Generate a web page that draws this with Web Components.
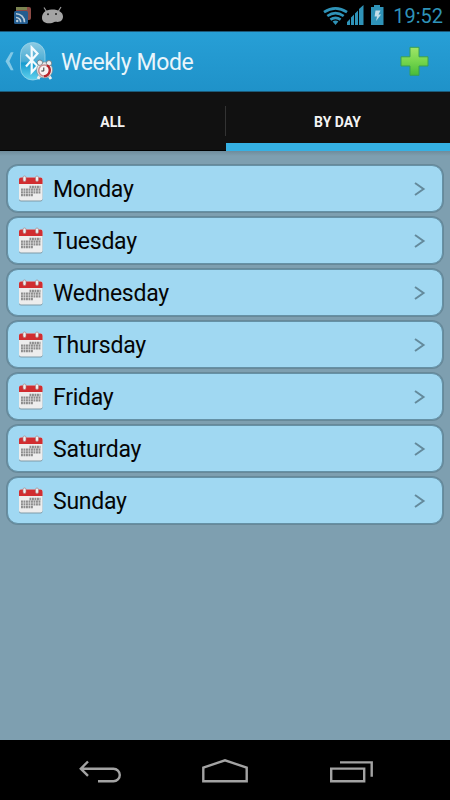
<!DOCTYPE html>
<html lang="en">
<head>
<meta charset="utf-8">
<title>Weekly Mode</title>
<style>
  body {
    margin: 0;
    font-family: Roboto, "Liberation Sans", sans-serif;
  }
</style>
</head>
<body>
<weekly-screen>
  <status-bar slot="top" time="19:52"></status-bar>
  <action-bar slot="top">Weekly Mode</action-bar>
  <tab-strip slot="top">
    <tab-item>ALL</tab-item>
    <tab-item selected>BY DAY</tab-item>
  </tab-strip>
  <day-row>Monday</day-row>
  <day-row>Tuesday</day-row>
  <day-row>Wednesday</day-row>
  <day-row>Thursday</day-row>
  <day-row>Friday</day-row>
  <day-row>Saturday</day-row>
  <day-row>Sunday</day-row>
  <nav-bar slot="bottom"></nav-bar>
</weekly-screen>

<script>
class WeeklyScreen extends HTMLElement {
    constructor() {
        super();
        this.attachShadow({ mode: 'open' });
        this.shadowRoot.innerHTML = `
      <style>
        :host {
          display: flex;
          flex-direction: column;
          width: 450px;
          height: 800px;
          overflow: hidden;
          background: #7e9fb0;
        }
        main {
          flex: 1;
          display: flex;
          flex-direction: column;
          gap: 5px;
          padding: 14px 7px 0 7px;
          background: linear-gradient(#6f8c9b, #7e9fb0 5px);
        }
      </style>
      <slot name="top"></slot>
      <main><slot></slot></main>
      <slot name="bottom"></slot>
    `;
    }
}

class StatusBar extends HTMLElement {
    constructor() {
        super();
        this.attachShadow({ mode: 'open' });
    }

    connectedCallback() {
        this.shadowRoot.innerHTML = `
      <style>
        :host {
          display: flex;
          align-items: center;
          justify-content: space-between;
          box-sizing: border-box;
          height: 31px;
          padding: 0 7px 0 13px;
          background: #000;
          color: #2f93b8;
        }
        div { display: flex; align-items: center; }
        svg { display: block; }
        span { font-size: 20px; line-height: 31px; margin-left: 8px; padding-top: 1px; }
      </style>
      <div>
        <svg width="52" height="31" viewBox="13 0 52 31">
          <path d="M16 7h13a2 2 0 0 1 2 2v9a2 2 0 0 1-2 2H16z" fill="#8c4b46"/>
          <path d="M16 7h11v3H16z" fill="#7c8452"/>
          <rect x="14" y="11" width="14" height="13" rx="1.5" fill="#245d90"/>
          <g fill="none" stroke="#b9cbd8" stroke-width="1.6">
            <path d="M16 17.5a4.5 4.5 0 0 1 4.7 4.7M16 13.7a8.4 8.4 0 0 1 8.5 8.5"/>
          </g>
          <circle cx="17.2" cy="21" r="1.2" fill="#b9cbd8"/>
          <path d="M44 7.5l2.5 4M61 7l-2.5 4" stroke="#9c9c9c" stroke-width="1.2"/>
          <path d="M42 18c0-5.500 4-8.300 9.500-8.500 6.500-.2 11.500 2.500 11.500 7 0 4-3 6-7 5.300-1.500 0-2 .5-4 1.200-5 1.200-10-.5-10-5z" fill="#a4a4a4"/>
          <circle cx="48" cy="14.300" r="1" fill="#222"/>
          <circle cx="56" cy="14" r="1" fill="#222"/>
        </svg>
      </div>
      <div>
        <svg width="62" height="31" viewBox="323 0 62 31">
          <g fill="none" stroke="#2f93b8" stroke-width="2.700">
            <path d="M324 12.200q11.500-7.800 23 0"/>
            <path d="M327.300 16q8.200-5.600 16.400 0"/>
            <path d="M330.400 19.600q5.100-3.600 10.200 0"/>
          </g>
          <path d="M332.600 21.400q2.900-1.800 5.800 0l-2.900 3.700z" fill="#2f93b8"/>
          <g fill="#2f93b8">
            <path d="M347 25v-3l3-3v6zM351 25v-7.500l3-3V25zM355 25V13.500l3-3V25zM359 25V9l4.500-4v20z"/>
            <path d="M371 7h3V5h6v2h3.500v18H371z"/>
          </g>
          <path d="M375.500 10.500h5l-2 4h2.600l-5 6.500.9-4.500h-2.400z" fill="#c3dfea"/>
        </svg>
        <span>${this.getAttribute('time')}</span>
      </div>
    `;
    }
}

class ActionBar extends HTMLElement {
    constructor() {
        super();
        this.attachShadow({ mode: 'open' });
        this.shadowRoot.innerHTML = `
      <style>
        :host {
          display: flex;
          align-items: center;
          box-sizing: border-box;
          height: 61px;
          padding: 0 19px 0 3px;
          border-top: 1px solid #1d5676;
          border-bottom: 1px solid #1c5b7a;
          background: linear-gradient(#279fd6, #1f92c9);
          color: #e9f5fb;
        }
        svg { display: block; flex: none; }
        h1 {
          flex: 1;
          margin: 0 0 0 6px;
          padding-top: 2px;
          font-size: 23px;
          font-weight: 400;
          line-height: 30px;
          letter-spacing: -0.4px;
        }
      </style>
      <svg width="52" height="48" viewBox="3 38 52 48">
        <defs>
          <linearGradient id="pill" x1="0" y1="0" x2="0" y2="1">
            <stop offset="0" stop-color="#8ccbe3"/>
            <stop offset=".5" stop-color="#4bacd4"/>
            <stop offset=".55" stop-color="#169bcf"/>
            <stop offset="1" stop-color="#62d2ee"/>
          </linearGradient>
        </defs>
        <path d="M10.800 52.300h2.800l-4.200 9 4.200 9h-2.800L5.500 61.300z" fill="#83c9e6"/>
        <rect x="20.500" y="42.500" width="24.500" height="37.500" rx="12" fill="url(#pill)" stroke="#a5d8eb" stroke-width=".7"/>
        <path d="M26 54.500l11.500 11.500-5.800 6.300V47.500l5.800 6L26 66.500" fill="none" stroke="#f4fbfe" stroke-width="2.200"/>
        <path d="M39.500 76l-1.500 3M49 76l2 3" stroke="#eceff0" stroke-width="2.800"/>
        <circle cx="44.600" cy="70" r="8" fill="#e9e9e9" stroke="#78868d" stroke-width=".6"/>
        <circle cx="39.900" cy="62.700" r="2.700" fill="#eceff0" stroke="#6b747a" stroke-width=".8"/>
        <circle cx="49" cy="63.200" r="2.700" fill="#eceff0" stroke="#6b747a" stroke-width=".8"/>
        <circle cx="44.300" cy="70.500" r="5.600" fill="#f8f2f2" stroke="#c98d8e" stroke-width="1.500"/>
        <path d="M47 65.300a6 6 0 0 1-3 11" fill="none" stroke="#b8242a" stroke-width="2.300"/>
        <path d="M43.800 67.500v3.500h-2.500" fill="none" stroke="#333" stroke-width="1"/>
      </svg>
      <h1><slot></slot></h1>
      <svg width="32" height="32" viewBox="399 45 32 32">
        <defs>
          <linearGradient id="plus" x1="0" y1="0" x2="0" y2="1">
            <stop offset="0" stop-color="#a0e568"/>
            <stop offset=".5" stop-color="#76d64d"/>
            <stop offset="1" stop-color="#48bb38"/>
          </linearGradient>
        </defs>
        <path d="M410 46.300h9v9.500h9v9.200h-9v9.300h-9V65h-9v-9.200h9z" fill="url(#plus)" stroke="#389f55" stroke-width="1"/>
      </svg>
    `;
    }
}

class TabStrip extends HTMLElement {
    constructor() {
        super();
        this.attachShadow({ mode: 'open' });
        this.shadowRoot.innerHTML = `
      <style>
        :host {
          display: grid;
          grid-template-columns: 226px 224px;
          height: 59px;
          background: #111;
        }
      </style>
      <slot></slot>
    `;
    }
}

class TabItem extends HTMLElement {
    constructor() {
        super();
        this.attachShadow({ mode: 'open' });
        this.shadowRoot.innerHTML = `
      <style>
        :host {
          display: grid;
          grid-template-columns: 1fr 1px;
          align-items: center;
          box-sizing: border-box;
          border-bottom: 1px solid #000;
          color: #f3f3f3;
          font-size: 14px;
          font-weight: 700;
          text-align: center;
        }
        :host([selected]) {
          border-bottom: 8px solid #35b1e4;
        }
        i { height: 30px; background: #333; }
        :host([selected]) i { background: none; }
        span { line-height: 20px; padding-top: 1px; }
        :host([selected]) span { padding-top: 8px; }
      </style>
      <span><slot></slot></span><i></i>
    `;
    }
}

class DayRow extends HTMLElement {
    constructor() {
        super();
        this.attachShadow({ mode: 'open' });
        this.shadowRoot.innerHTML = `
      <style>
        :host {
          display: flex;
          align-items: center;
          box-sizing: border-box;
          height: 47px;
          padding: 0 15px 0 10px;
          border: 1px solid #6591a6;
          border-radius: 11px;
          box-shadow: 0 0 0 1px #688999;
          background: #a0d8f2;
          color: #050505;
        }
        svg { display: block; flex: none; }
        svg:first-child { margin-top: -2px; }
        span {
          flex: 1;
          margin-left: 9px;
          padding-top: 2px;
          font-size: 23px;
          line-height: 30px;
          letter-spacing: -0.25px;
        }
      </style>
      <svg width="26" height="28" viewBox="0 0 26 28">
        <rect x="1" y="3.500" width="23.500" height="23" rx="2" fill="#7f9aa7"/>
        <rect x="1" y="2.500" width="23.500" height="23" rx="2" fill="#ededed"/>
        <path d="M1 9V4.500a2 2 0 0 1 2-2h19.500a2 2 0 0 1 2 2V9z" fill="#d12d30"/>
        <rect x="5" y="1" width="3" height="5.500" rx="1.500" fill="#eee" stroke="#a77" stroke-width=".6"/>
        <rect x="17.500" y="1" width="3" height="5.500" rx="1.500" fill="#eee" stroke="#a77" stroke-width=".6"/>
        <g fill="none" stroke="#8d8d8d" stroke-width="2.300" stroke-dasharray="1.900 .6">
          <path d="M11.500 12H22.500M3 14.700h19.500M3 17.400h19.500M3 20.100h12"/>
        </g>
      </svg>
      <span><slot></slot></span>
      <svg width="14" height="16" viewBox="0 0 14 16">
        <path d="M2 2l8.500 6L2 14" fill="none" stroke="#648a9c" stroke-width="2"/>
      </svg>
    `;
    }
}

class NavBar extends HTMLElement {
    constructor() {
        super();
        this.attachShadow({ mode: 'open' });
        this.shadowRoot.innerHTML = `
      <style>
        :host {
          display: flex;
          justify-content: space-between;
          align-items: center;
          box-sizing: border-box;
          height: 60px;
          padding: 0 76px 0 78px;
          background: #000;
        }
        svg { display: block; fill: none; stroke: #a3a3a3; stroke-width: 2.400; }
      </style>
      <svg width="44" height="60" viewBox="78 740 44 60">
        <path d="M88 761.500l-7.200 7.200 7.200 7.200M81 768.700h32.500a6.300 6.300 0 0 1 0 12.600H98"/>
      </svg>
      <svg width="48" height="60" viewBox="201 740 48 60">
        <path d="M203.300 767.700l21.700-7.400 21.700 7.400v13.600h-43.400z"/>
      </svg>
      <svg width="46" height="60" viewBox="328 740 46 60">
        <path d="M331.200 768.600h33v12.700h-33zM340 762.400h31.700v14.300"/>
      </svg>
    `;
    }
}

customElements.define('weekly-screen', WeeklyScreen);
customElements.define('status-bar', StatusBar);
customElements.define('action-bar', ActionBar);
customElements.define('tab-strip', TabStrip);
customElements.define('tab-item', TabItem);
customElements.define('day-row', DayRow);
customElements.define('nav-bar', NavBar);
</script>
</body>
</html>
